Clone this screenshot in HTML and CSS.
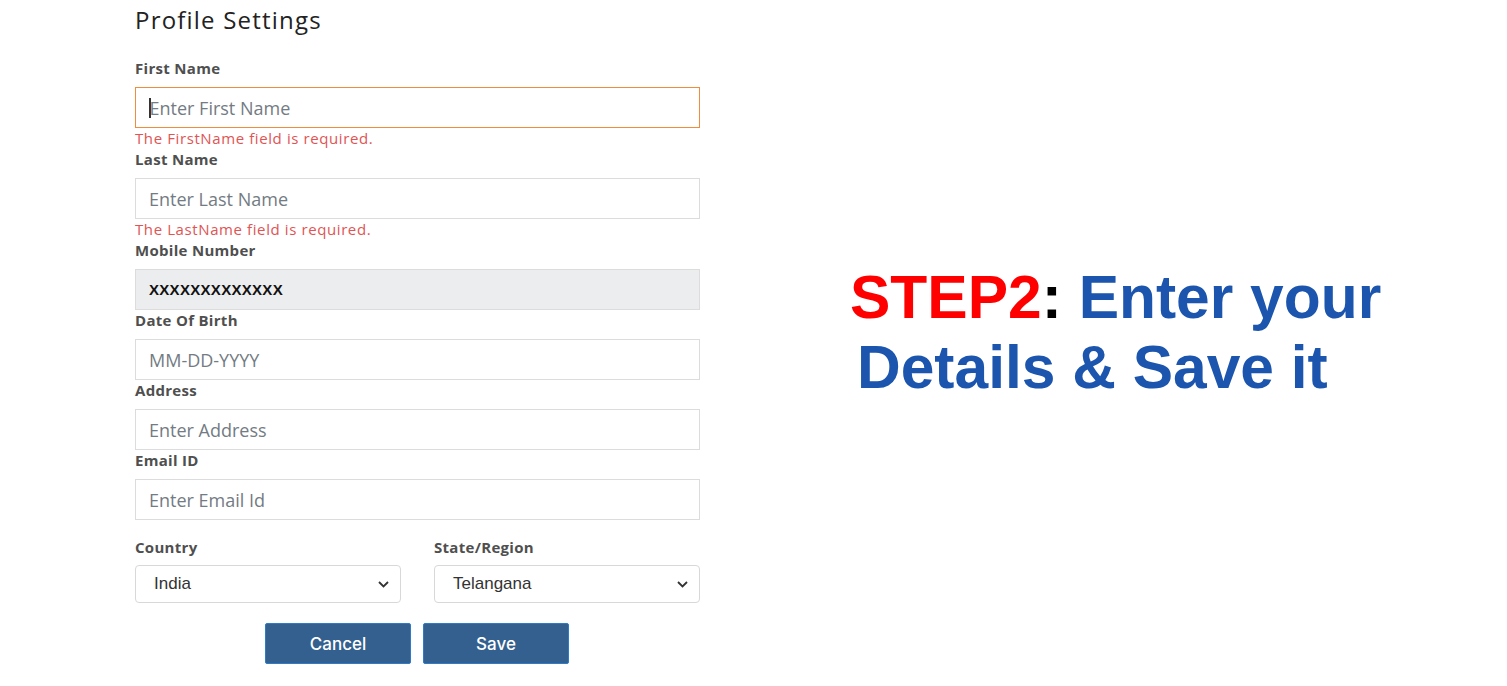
FILE: index.html
```html
<!DOCTYPE html>
<html>
<head>
<meta charset="utf-8">
<link rel="stylesheet" href="styles.css">
</head>
<body>
<div class="page">
  <div class="form-col">
    <h1 class="title">Profile Settings</h1>
    <div class="field">
      <div class="label">First Name</div>
      <div class="input focus"><span class="caret"></span>Enter First Name</div>
      <div class="error">The FirstName field is required.</div>
    </div>
    <div class="field">
      <div class="label">Last Name</div>
      <div class="input">Enter Last Name</div>
      <div class="error">The LastName field is required.</div>
    </div>
    <div class="field">
      <div class="label">Mobile Number</div>
      <div class="input disabled"><span class="masked">XXXXXXXXXXXXX</span></div>
    </div>
    <div class="field">
      <div class="label">Date Of Birth</div>
      <div class="input">MM-DD-YYYY</div>
    </div>
    <div class="field">
      <div class="label">Address</div>
      <div class="input">Enter Address</div>
    </div>
    <div class="field">
      <div class="label">Email ID</div>
      <div class="input">Enter Email Id</div>
    </div>
    <div class="select-row">
      <div class="select-field">
        <div class="label">Country</div>
        <div class="select"><span>India</span>
          <svg class="chev" width="11" height="7" viewBox="0 0 11 7"><path d="M1 1 L5.5 5.5 L10 1" fill="none" stroke="#333" stroke-width="1.8"/></svg>
        </div>
      </div>
      <div class="select-field">
        <div class="label">State/Region</div>
        <div class="select"><span>Telangana</span>
          <svg class="chev" width="11" height="7" viewBox="0 0 11 7"><path d="M1 1 L5.5 5.5 L10 1" fill="none" stroke="#333" stroke-width="1.8"/></svg>
        </div>
      </div>
    </div>
    <div class="buttons">
      <button class="btn">Cancel</button>
      <button class="btn">Save</button>
    </div>
  </div>
  <div class="step">
    <div class="line1"><span class="red">STEP2</span><span class="black">:</span> Enter your</div>
    <div class="line2">Details &amp; Save it</div>
  </div>
</div>
</body>
</html>
```
FILE: styles.css
```css
html, body {
  margin: 0;
  padding: 0;
  background: #ffffff;
}
.page {
  display: flex;
  padding-left: 135px;
  align-items: flex-start;
}
.form-col {
  width: 565px;
  display: flex;
  flex-direction: column;
}
.title {
  font-family: "Open Sans", sans-serif;
  font-weight: 400;
  font-size: 24px;
  line-height: 30px;
  letter-spacing: 1.2px;
  margin: 5px 0 24px 0;
  color: #222;
}
.field {
  display: flex;
  flex-direction: column;
  margin-bottom: 1px;
}
.label {
  font-family: "Open Sans", sans-serif;
  font-weight: 700;
  font-size: 15px;
  line-height: 18px;
  letter-spacing: 0.3px;
  color: #4f4f4f;
  margin-bottom: 10px;
}
.input {
  box-sizing: border-box;
  height: 41px;
  border: 1px solid #dcdcdc;
  padding: 0 13px;
  display: flex;
  align-items: center;
  font-family: "Open Sans", sans-serif;
  font-size: 18px;
  color: #737b83;
  background: #fff;
}
.input.focus {
  border-color: #f08c3c;
}
.caret {
  display: inline-block;
  width: 1.5px;
  height: 20px;
  background: #333;
  margin-right: -1px;
}
.input.disabled {
  background: #ecedef;
}
.masked {
  font-family: "Liberation Sans", Arial, sans-serif;
  font-weight: 700;
  font-size: 15px;
  color: #111;
  letter-spacing: 0.3px;
}
.error {
  font-family: "Open Sans", sans-serif;
  font-size: 15px;
  line-height: 18px;
  letter-spacing: 0.6px;
  color: #e05454;
  margin: 1px 0 2px 0;
}
.select-row {
  display: grid;
  grid-template-columns: 266px 266px;
  justify-content: space-between;
  margin-top: 17px;
}
.select-field {
  display: flex;
  flex-direction: column;
}
.select-field .label {
  margin-bottom: 9px;
}
.select {
  box-sizing: border-box;
  height: 38px;
  border: 1px solid #d8d8d8;
  border-radius: 4px;
  padding: 0 11px 0 18px;
  display: flex;
  align-items: center;
  justify-content: space-between;
  font-family: "Liberation Sans", Arial, sans-serif;
  font-size: 17px;
  color: #333;
}
.chev {
  display: block;
}
.buttons {
  display: flex;
  justify-content: center;
  gap: 12px;
  margin-top: 20px;
  padding-right: 1px;
}
.btn {
  box-sizing: border-box;
  width: 146px;
  height: 41px;
  background: #34608f;
  border: 1px solid #2e7bc8;
  border-radius: 2px;
  color: #fff;
  font-family: "Inter", sans-serif;
  font-size: 17px;
  font-weight: 500;
  padding: 0;
}
.step {
  margin-left: 150px;
  margin-top: 262px;
  font-family: "Liberation Sans", Arial, sans-serif;
  font-weight: 700;
  font-size: 60.5px;
  line-height: 70px;
  color: #1b55ad;
  white-space: nowrap;
}
.red { color: #ff0000; }
.black { color: #000; }
.line2 { padding-left: 7px; }
```
